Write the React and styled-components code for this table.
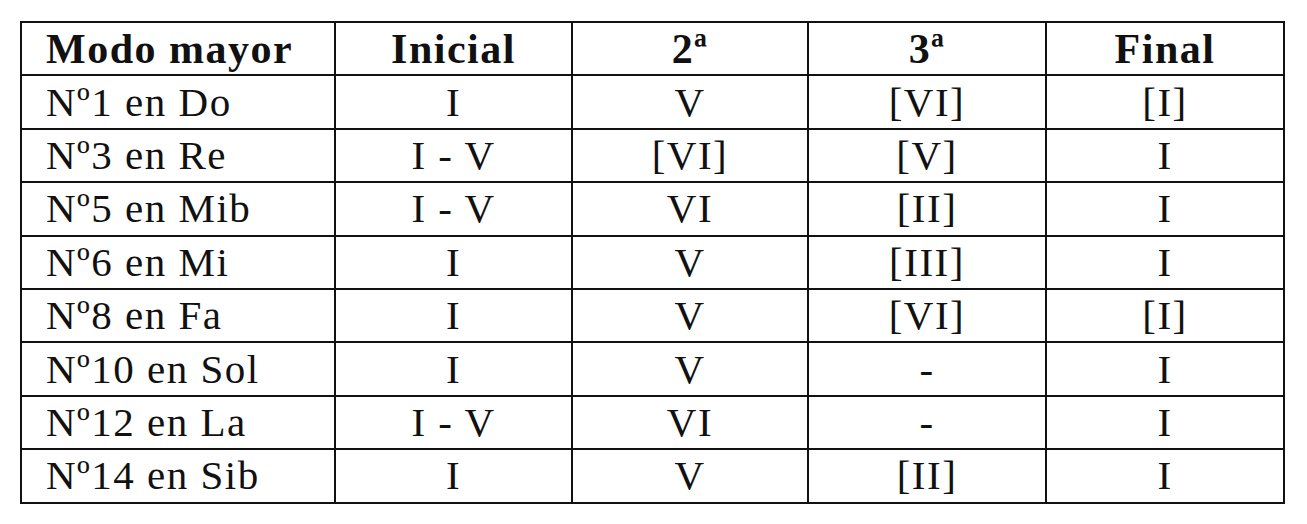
import React from "react";
import styled, { createGlobalStyle } from "styled-components";

const GlobalStyle = createGlobalStyle`
  html, body {
    margin: 0;
    padding: 0;
    background: #ffffff;
  }
`;

const Page = styled.div`
  padding: 21px 20px;
  font-family: "Liberation Serif", "DejaVu Serif", serif;
  color: #111;
`;

const Table = styled.table`
  border-collapse: collapse;
  table-layout: fixed;
  width: 1263px;
  border: 2px solid #111;
`;

const Row = styled.tr`
  height: 53.4px;
`;

const HeadCell = styled.th`
  border: 2px solid #111;
  font-size: 42px;
  font-weight: bold;
  letter-spacing: 1.5px;
  line-height: 1;
  padding: 0 ${({ $left }) => ($left ? "24px" : "0")};
  text-align: ${({ $left }) => ($left ? "left" : "center")};
  vertical-align: middle;
  white-space: nowrap;
`;

const Cell = styled.td`
  border: 2px solid #111;
  font-size: 41px;
  letter-spacing: 1.5px;
  line-height: 1;
  padding: 0 ${({ $left }) => ($left ? "24px" : "0")};
  text-align: ${({ $left }) => ($left ? "left" : "center")};
  vertical-align: middle;
  white-space: nowrap;
`;

const widths = [314, 237, 236, 238, 238];

const headers = ["Modo mayor", "Inicial", "2ª", "3ª", "Final"];

const rows = [
  ["Nº1 en Do", "I", "V", "[VI]", "[I]"],
  ["Nº3 en Re", "I - V", "[VI]", "[V]", "I"],
  ["Nº5 en Mib", "I - V", "VI", "[II]", "I"],
  ["Nº6 en Mi", "I", "V", "[III]", "I"],
  ["Nº8 en Fa", "I", "V", "[VI]", "[I]"],
  ["Nº10 en Sol", "I", "V", "-", "I"],
  ["Nº12 en La", "I - V", "VI", "-", "I"],
  ["Nº14 en Sib", "I", "V", "[II]", "I"],
];

export default function App() {
  return (
    <Page>
      <GlobalStyle />
      <Table>
        <colgroup>
          {widths.map((w, i) => (
            <col key={i} style={{ width: w }} />
          ))}
        </colgroup>
        <thead>
          <Row>
            {headers.map((h, i) => (
              <HeadCell key={h} $left={i === 0}>
                {h}
              </HeadCell>
            ))}
          </Row>
        </thead>
        <tbody>
          {rows.map((r) => (
            <Row key={r[0]}>
              {r.map((c, i) => (
                <Cell key={i} $left={i === 0}>
                  {c}
                </Cell>
              ))}
            </Row>
          ))}
        </tbody>
      </Table>
    </Page>
  );
}
